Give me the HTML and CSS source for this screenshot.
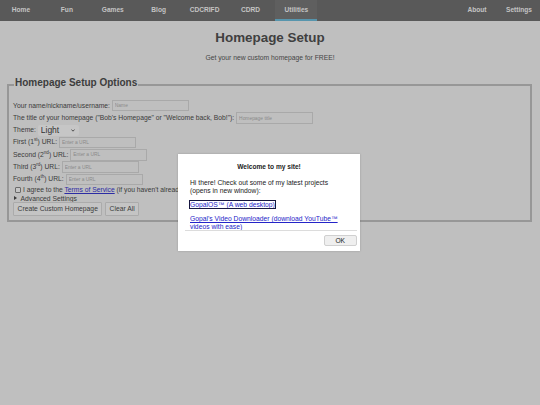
FILE: index.html
```html
<!DOCTYPE html>
<html lang="en">
<head>
  <meta charset="UTF-8" />
  <meta name="viewport" content="width=device-width, initial-scale=1.0" />
  <title>Homepage Setup</title>
  <link rel="stylesheet" href="styles.css">
</head>
<body>
  <nav class="topnav">
    <div class="nav-left">
      <a href="#">Home</a>
      <a href="#">Fun</a>
      <a href="#">Games</a>
      <a href="#">Blog</a>
      <a href="#">CDCRIFD</a>
      <a href="#">CDRD</a>
      <a href="#" class="active">Utilities</a>
    </div>
    <div class="nav-right"><a href="#">About</a><a href="#">Settings</a></div>
  </nav>

  <h1>Homepage Setup</h1>
  <p class="subtitle">Get your new custom homepage for FREE!</p>

  <fieldset class="options">
    <legend>Homepage Setup Options</legend>
    <div class="row first">Your name/nickname/username: <input type="text" placeholder="Name"></div>
    <div class="row">The title of your homepage ("Bob's Homepage" or "Welcome back, Bob!"): <input type="text" placeholder="Homepage title"></div>
    <div class="row">Theme: <span class="select-wrap"><select><option>Light</option><option>Dark</option></select><svg class="chev" width="4" height="3" viewBox="0 0 4 3"><path d="M0.4 0.5 L2 2.2 L3.6 0.5" fill="none" stroke="#333" stroke-width="0.8"/></svg></span></div>
    <div class="row">First (1<sup>st</sup>) URL: <input type="text" placeholder="Enter a URL"></div>
    <div class="row">Second (2<sup>nd</sup>) URL: <input type="text" placeholder="Enter a URL"></div>
    <div class="row">Third (3<sup>rd</sup>) URL: <input type="text" placeholder="Enter a URL"></div>
    <div class="row">Fourth (4<sup>th</sup>) URL: <input type="text" placeholder="Enter a URL"></div>
    <div class="row check-row"><input type="checkbox" class="check"> I agree to the <a href="#" class="tos">Terms of Service</a> (if you haven't already)</div>
    <div class="row adv-row"><span class="tri"></span>Advanced Settings</div>
    <div class="row btn-row">
      <button class="btn">Create Custom Homepage</button>
      <button class="btn">Clear All</button>
    </div>
  </fieldset>

  <div class="modal">
    <div class="modal-title">Welcome to my site!</div>
    <div class="modal-body">
      <p>Hi there! Check out some of my latest projects (opens in new window):</p>
      <p><a href="#" class="focused">GopalOS™ (A web desktop)</a></p>
      <p><a href="#">Gopal's Video Downloader (download YouTube™ videos with ease)</a></p>
    </div>
    <div class="modal-foot"><button class="ok">OK</button></div>
  </div>
</body>
</html>
```

FILE: styles.css
```css
body {
  margin: 0;
  font-family: "Liberation Sans", Arial, sans-serif;
  background: #bfbfbf;
  color: #3b3b3b;
  font-size: 6.75px;
}
.topnav {
  height: 21px;
  background: #595959;
  display: flex;
  justify-content: space-between;
}
.topnav a {
  display: inline-block;
  box-sizing: border-box;
  width: 42px;
  height: 21px;
  line-height: 20px;
  text-align: center;
  color: #c4c4c4;
  font-weight: bold;
  font-size: 6.6px;
  text-decoration: none;
}
.nav-left a {
  margin-right: 2px;
}
.topnav a.active {
  background: #5f5f5f;
  border-bottom: 2px solid #5795ad;
  line-height: 19px;
}
h1 {
  margin: 8.5px 0 0;
  text-align: center;
  font-size: 13.4px;
  line-height: 16px;
  color: #404040;
}
.subtitle {
  margin: 8.5px 0 0;
  text-align: center;
  line-height: 8px;
  color: #454545;
}
.options {
  margin: 15px 8px 0 7px;
  border: 2px solid #979797;
  padding: 0 4px 4px;
}
.options legend {
  font-size: 10px;
  font-weight: bold;
  line-height: 12px;
  padding: 0 1px 4px;
  margin-left: 1px;
  color: #3d3d3d;
}
.row {
  height: 12.3px;
  line-height: 12.3px;
  white-space: nowrap;
}
.row.first {
  margin-top: 6.5px;
}
.row input[type="text"] {
  box-sizing: border-box;
  width: 77px;
  height: 11.5px;
  margin: 0;
  vertical-align: middle;
  border: 1px solid #a9a9a9;
  background: #bfbfbf;
  padding: 0 2px;
  font-family: inherit;
  font-size: 4.9px;
  outline: none;
}
.row input::placeholder {
  color: #8a8a8a;
}
sup {
  font-size: 4.6px;
  line-height: 0;
  vertical-align: 2.8px;
}
.select-wrap {
  position: relative;
  display: inline-block;
  vertical-align: middle;
  height: 11.5px;
}
.select-wrap select {
  appearance: none;
  -webkit-appearance: none;
  width: 41px;
  height: 11.5px;
  border: none;
  border-radius: 2px;
  background: #c6c6c6;
  font-family: inherit;
  font-size: 8.5px;
  color: #333;
  padding: 0 0 0 3px;
  display: block;
}
.chev {
  position: absolute;
  right: 4px;
  top: 4.5px;
}
.check-row {
  height: 8.5px;
  line-height: 8.5px;
  margin-top: 0.8px;
}
.check {
  appearance: none;
  -webkit-appearance: none;
  box-sizing: border-box;
  width: 6px;
  height: 6px;
  margin: 0 0 0 2px;
  vertical-align: -0.5px;
  border: 1px solid #6a6a6a;
  border-radius: 1px;
  background: #c5c5c5;
}
.tos {
  color: #2c2ca4;
}
.adv-row {
  height: 7px;
  line-height: 7px;
}
.tri {
  display: inline-block;
  width: 0;
  height: 0;
  border-top: 2px solid transparent;
  border-bottom: 2px solid transparent;
  border-left: 3.5px solid #3b3b3b;
  margin: 0 4px 0 0.5px;
  vertical-align: 0.5px;
}
.btn-row {
  height: 14px;
  line-height: 14px;
  display: flex;
  align-items: center;
  gap: 2.5px;
}
.btn {
  height: 13.3px;
  padding: 0 3.6px;
  border: 1px solid #ababab;
  border-radius: 1px;
  background: #c4c4c4;
  color: #3b3b3b;
  font-family: inherit;
  font-size: 6.75px;
}
.modal {
  position: absolute;
  left: 178px;
  top: 154px;
  width: 182px;
  height: 97px;
  box-sizing: border-box;
  background: #fff;
  color: #222;
  box-shadow: 0 0 2px rgba(0, 0, 0, 0.2);
}
.modal-title {
  margin-top: 9.3px;
  text-align: center;
  font-weight: bold;
  line-height: 8px;
  font-size: 6.6px;
}
.modal-body {
  margin: 8px 3px 0 7px;
  padding: 0 12px 0 5px;
  height: 51px;
  overflow: hidden;
  border-bottom: 1px solid #dcdcdc;
  line-height: 7.5px;
}
.modal-body p {
  margin: 0 0 5.5px;
}
.modal-body p:first-child {
  line-height: 8px;
}
.modal-body p:nth-child(2) {
  margin-bottom: 7px;
}
.modal-body a {
  color: #2424c8;
}
.modal-body a.focused {
  outline: 1px solid #161640;
  outline-offset: 0;
}
.modal-foot {
  text-align: right;
  padding: 3.5px 3px 0;
}
.ok {
  width: 33.5px;
  height: 11.7px;
  border: 1px solid #d0d0d0;
  border-radius: 2px;
  background: #efefef;
  color: #222;
  font-family: inherit;
  font-size: 6.7px;
}
```
